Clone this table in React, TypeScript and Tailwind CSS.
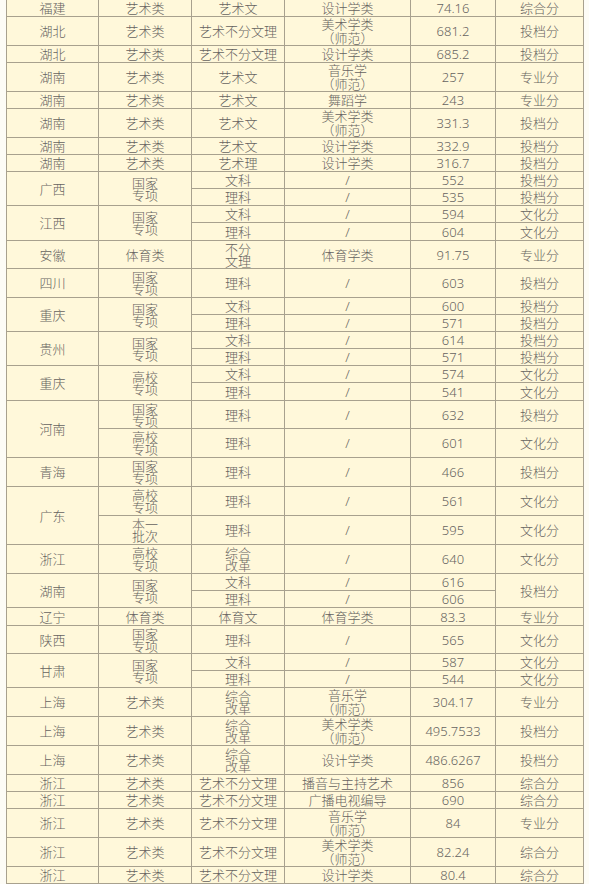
import React from "react";

type C = { t: string; rs?: number };
type Row = { h: number; cells: C[] };

const S = 17;
const D = 29;

const rows: Row[] = [
  { h: S, cells: [{ t: "福建" }, { t: "艺术类" }, { t: "艺术文" }, { t: "设计学类" }, { t: "74.16" }, { t: "综合分" }] },
  { h: D, cells: [{ t: "湖北" }, { t: "艺术类" }, { t: "艺术不分文理" }, { t: "美术学类\n（师范）" }, { t: "681.2" }, { t: "投档分" }] },
  { h: S, cells: [{ t: "湖北" }, { t: "艺术类" }, { t: "艺术不分文理" }, { t: "设计学类" }, { t: "685.2" }, { t: "投档分" }] },
  { h: D, cells: [{ t: "湖南" }, { t: "艺术类" }, { t: "艺术文" }, { t: "音乐学\n（师范）" }, { t: "257" }, { t: "专业分" }] },
  { h: S, cells: [{ t: "湖南" }, { t: "艺术类" }, { t: "艺术文" }, { t: "舞蹈学" }, { t: "243" }, { t: "专业分" }] },
  { h: D, cells: [{ t: "湖南" }, { t: "艺术类" }, { t: "艺术文" }, { t: "美术学类\n（师范）" }, { t: "331.3" }, { t: "投档分" }] },
  { h: S, cells: [{ t: "湖南" }, { t: "艺术类" }, { t: "艺术文" }, { t: "设计学类" }, { t: "332.9" }, { t: "投档分" }] },
  { h: S, cells: [{ t: "湖南" }, { t: "艺术类" }, { t: "艺术理" }, { t: "设计学类" }, { t: "316.7" }, { t: "投档分" }] },
  { h: S, cells: [{ t: "广西", rs: 2 }, { t: "国家\n专项", rs: 2 }, { t: "文科" }, { t: "/" }, { t: "552" }, { t: "投档分" }] },
  { h: S, cells: [{ t: "理科" }, { t: "/" }, { t: "535" }, { t: "投档分" }] },
  { h: S, cells: [{ t: "江西", rs: 2 }, { t: "国家\n专项", rs: 2 }, { t: "文科" }, { t: "/" }, { t: "594" }, { t: "文化分" }] },
  { h: 18, cells: [{ t: "理科" }, { t: "/" }, { t: "604" }, { t: "文化分" }] },
  { h: 28, cells: [{ t: "安徽" }, { t: "体育类" }, { t: "不分\n文理" }, { t: "体育学类" }, { t: "91.75" }, { t: "专业分" }] },
  { h: D, cells: [{ t: "四川" }, { t: "国家\n专项" }, { t: "理科" }, { t: "/" }, { t: "603" }, { t: "投档分" }] },
  { h: S, cells: [{ t: "重庆", rs: 2 }, { t: "国家\n专项", rs: 2 }, { t: "文科" }, { t: "/" }, { t: "600" }, { t: "投档分" }] },
  { h: S, cells: [{ t: "理科" }, { t: "/" }, { t: "571" }, { t: "投档分" }] },
  { h: S, cells: [{ t: "贵州", rs: 2 }, { t: "国家\n专项", rs: 2 }, { t: "文科" }, { t: "/" }, { t: "614" }, { t: "投档分" }] },
  { h: S, cells: [{ t: "理科" }, { t: "/" }, { t: "571" }, { t: "投档分" }] },
  { h: S, cells: [{ t: "重庆", rs: 2 }, { t: "高校\n专项", rs: 2 }, { t: "文科" }, { t: "/" }, { t: "574" }, { t: "文化分" }] },
  { h: 18, cells: [{ t: "理科" }, { t: "/" }, { t: "541" }, { t: "文化分" }] },
  { h: 28, cells: [{ t: "河南", rs: 2 }, { t: "国家\n专项" }, { t: "理科" }, { t: "/" }, { t: "632" }, { t: "投档分" }] },
  { h: D, cells: [{ t: "高校\n专项" }, { t: "理科" }, { t: "/" }, { t: "601" }, { t: "文化分" }] },
  { h: D, cells: [{ t: "青海" }, { t: "国家\n专项" }, { t: "理科" }, { t: "/" }, { t: "466" }, { t: "投档分" }] },
  { h: D, cells: [{ t: "广东", rs: 2 }, { t: "高校\n专项" }, { t: "理科" }, { t: "/" }, { t: "561" }, { t: "文化分" }] },
  { h: D, cells: [{ t: "本一\n批次" }, { t: "理科" }, { t: "/" }, { t: "595" }, { t: "文化分" }] },
  { h: D, cells: [{ t: "浙江" }, { t: "高校\n专项" }, { t: "综合\n改革" }, { t: "/" }, { t: "640" }, { t: "文化分" }] },
  { h: S, cells: [{ t: "湖南", rs: 2 }, { t: "国家\n专项", rs: 2 }, { t: "文科" }, { t: "/" }, { t: "616" }, { t: "投档分", rs: 2 }] },
  { h: S, cells: [{ t: "理科" }, { t: "/" }, { t: "606" }] },
  { h: 18, cells: [{ t: "辽宁" }, { t: "体育类" }, { t: "体育文" }, { t: "体育学类" }, { t: "83.3" }, { t: "专业分" }] },
  { h: 28, cells: [{ t: "陕西" }, { t: "国家\n专项" }, { t: "理科" }, { t: "/" }, { t: "565" }, { t: "文化分" }] },
  { h: S, cells: [{ t: "甘肃", rs: 2 }, { t: "国家\n专项", rs: 2 }, { t: "文科" }, { t: "/" }, { t: "587" }, { t: "文化分" }] },
  { h: S, cells: [{ t: "理科" }, { t: "/" }, { t: "544" }, { t: "文化分" }] },
  { h: D, cells: [{ t: "上海" }, { t: "艺术类" }, { t: "综合\n改革" }, { t: "音乐学\n（师范）" }, { t: "304.17" }, { t: "专业分" }] },
  { h: D, cells: [{ t: "上海" }, { t: "艺术类" }, { t: "综合\n改革" }, { t: "美术学类\n（师范）" }, { t: "495.7533" }, { t: "投档分" }] },
  { h: D, cells: [{ t: "上海" }, { t: "艺术类" }, { t: "综合\n改革" }, { t: "设计学类" }, { t: "486.6267" }, { t: "投档分" }] },
  { h: S, cells: [{ t: "浙江" }, { t: "艺术类" }, { t: "艺术不分文理" }, { t: "播音与主持艺术" }, { t: "856" }, { t: "综合分" }] },
  { h: S, cells: [{ t: "浙江" }, { t: "艺术类" }, { t: "艺术不分文理" }, { t: "广播电视编导" }, { t: "690" }, { t: "综合分" }] },
  { h: D, cells: [{ t: "浙江" }, { t: "艺术类" }, { t: "艺术不分文理" }, { t: "音乐学\n（师范）" }, { t: "84" }, { t: "专业分" }] },
  { h: D, cells: [{ t: "浙江" }, { t: "艺术类" }, { t: "艺术不分文理" }, { t: "美术学类\n（师范）" }, { t: "82.24" }, { t: "综合分" }] },
  { h: S, cells: [{ t: "浙江" }, { t: "艺术类" }, { t: "艺术不分文理" }, { t: "设计学类" }, { t: "80.4" }, { t: "综合分" }] },
];

function Lines({ t }: { t: string }) {
  const parts = t.split("\n");
  if (parts.length === 1) return <div>{t}</div>;
  // the "（师范）" cells are spaced a little looser than the stacked two-word cells
  const loose = t.includes("师范");
  return (
    <div className={loose ? "leading-[14px]" : "leading-[12px]"}>
      {parts.map((p, i) => (
        <div key={i}>{p}</div>
      ))}
    </div>
  );
}

export default function App() {
  return (
    <div className="w-[589px] h-[884px] overflow-hidden bg-[#fdfcf6] pl-[6px]">
      <table
        className="table-fixed border-collapse -mt-px w-[577px] text-[13px] leading-[14px] text-[#666360] text-center"
        style={{ fontFamily: '"Noto Sans", "Noto Sans CJK SC", sans-serif' }}
      >
        <colgroup>
          <col className="w-[92px]" />
          <col className="w-[93px]" />
          <col className="w-[93px]" />
          <col className="w-[126px]" />
          <col className="w-[85px]" />
          <col className="w-[88px]" />
        </colgroup>
        <tbody>
          {rows.map((r, i) => (
            <tr key={i} style={{ height: r.h }}>
              {r.cells.map((c, j) => (
                <td
                  key={j}
                  rowSpan={c.rs}
                  className="border border-[#a8a18e] bg-[#fff8da] p-0 align-middle whitespace-nowrap font-light"
                >
                  <Lines t={c.t} />
                </td>
              ))}
            </tr>
          ))}
        </tbody>
      </table>
    </div>
  );
}
